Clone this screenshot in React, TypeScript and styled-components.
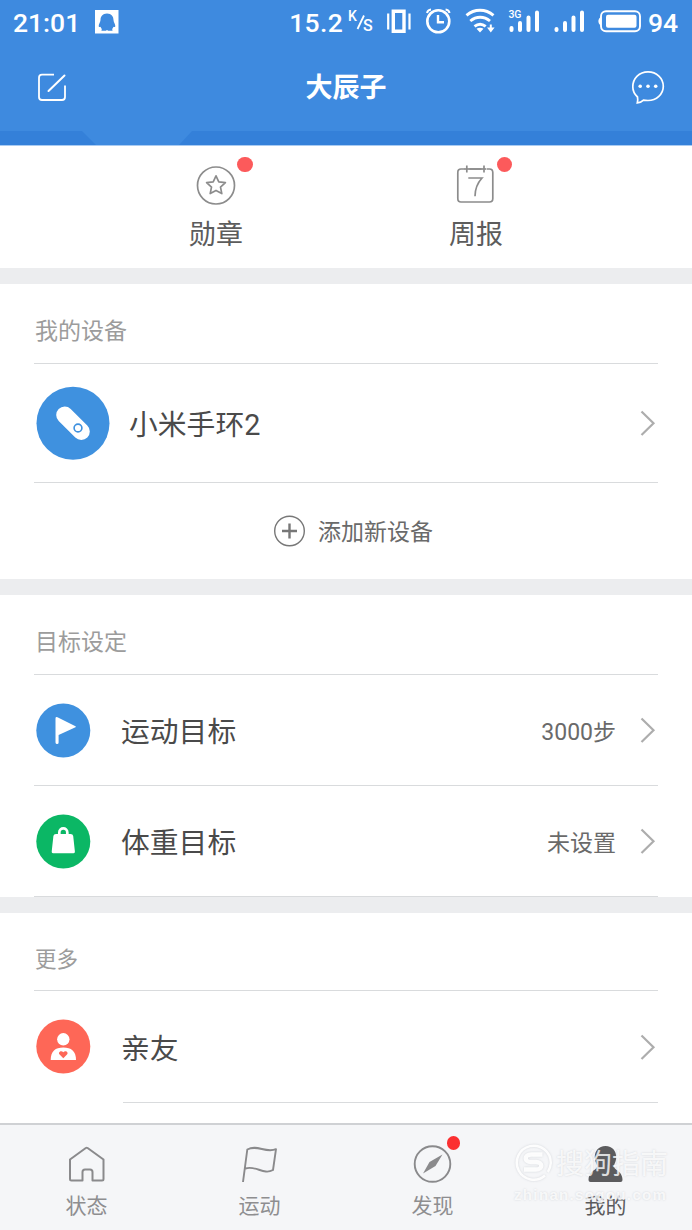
import React from "react";
import styled, { createGlobalStyle } from "styled-components";

const Global = createGlobalStyle`
  * { box-sizing: border-box; }
  body { margin: 0; background: #fff; }
`;

const Screen = styled.div`
  position: relative;
  display: flex;
  flex-direction: column;
  width: 692px;
  height: 1230px;
  overflow: hidden;
  background: #fff;
  color: #4a4a4a;
  font-family: Roboto, "Noto Sans CJK SC", sans-serif;
`;

const Header = styled.header`
  flex: none;
  height: 145px;
  background: #3e8adf;
  color: #fff;
  display: flex;
  flex-direction: column;
`;

const StatusBar = styled.div`
  display: flex;
  align-items: center;
  height: 44px;
  padding: 0 13px;
  font-size: 26.5px;
  font-weight: 500;
`;

const Clock = styled.span`
  width: 82px;
`;

const StatusRight = styled.div`
  display: flex;
  align-items: center;
  margin-left: auto;
`;

const Speed = styled.span`
  letter-spacing: 0.3px;
`;

const StatusIcons = styled.svg`
  display: block;
  margin-left: 4px;
`;

const Battery = styled.span`
  width: 31px;
  margin-left: 7px;
`;

const TitleBar = styled.div`
  display: grid;
  grid-template-columns: 60px 1fr 60px;
  align-items: center;
  height: 87px;
  padding: 0 22px;
`;

const Title = styled.h1`
  margin: 0;
  text-align: center;
  font-size: 27px;
  line-height: 40px;
  font-weight: 700;
`;

const Wave = styled.svg`
  display: block;
`;

const NavIcon = styled.svg<{ $end?: boolean }>`
  display: block;
  justify-self: ${(p) => (p.$end ? "end" : "start")};
`;

const Shortcuts = styled.div`
  flex: none;
  display: grid;
  grid-template-columns: 260px 260px;
  justify-content: center;
  height: 123px;
  padding-top: 19px;
  border-top: 1px solid #a9cbf2;
`;

const Shortcut = styled.div`
  position: relative;
  display: flex;
  flex-direction: column;
  align-items: center;
  font-size: 27px;
  line-height: 40px;
  color: #5c5c5c;
  svg { display: block; margin-bottom: 10px; }
`;

const Dot = styled.i<{ $x: number; $y: number; $size: number; $color: string }>`
  position: absolute;
  left: calc(50% + ${(p) => p.$x}px);
  top: ${(p) => p.$y}px;
  width: ${(p) => p.$size}px;
  height: ${(p) => p.$size}px;
  border-radius: 50%;
  background: ${(p) => p.$color};
`;

const Gap = styled.div`
  flex: none;
  height: 16px;
  background: #ecedef;
`;

const Section = styled.section`
  flex: none;
  padding: 0 34px;
`;

const SectionTitle = styled.h2<{ $height: number; $size?: number }>`
  display: flex;
  align-items: center;
  height: ${(p) => p.$height}px;
  margin: 0;
  padding: 11px 1px 0;
  border-bottom: 1px solid #d9dbdd;
  font-size: ${(p) => p.$size ?? 23}px;
  font-weight: 400;
  color: #9c9c9c;
`;

const Row = styled.div<{ $height: number; $line?: boolean; $gap: number }>`
  display: flex;
  align-items: center;
  height: ${(p) => p.$height}px;
  padding: 0 1px 0 2px;
  border-bottom: ${(p) => (p.$line ? "1px solid #d9dbdd" : "none")};
  svg { flex: none; display: block; }
  svg:first-child { margin-right: ${(p) => p.$gap}px; }
`;

const RowLabel = styled.span`
  flex: 1;
  padding-top: 4px;
  font-size: 28.8px;
  line-height: 42px;
`;

const RowValue = styled.span`
  margin-right: 23px;
  padding-bottom: 1px;
  font-size: 23px;
  color: #6a6a6a;
`;

const InsetLine = styled.div`
  height: 1px;
  margin-left: 89px;
  background: #d9dbdd;
`;

const AddRow = styled.div`
  display: flex;
  align-items: center;
  justify-content: center;
  gap: 12px;
  height: 96px;
  padding-left: 15px;
  font-size: 23px;
  color: #6a6a6a;
`;

const AddLabel = styled.span`
  padding-bottom: 2px;
`;

const TabBar = styled.nav`
  position: absolute;
  left: 0;
  right: 0;
  bottom: 0;
  display: grid;
  grid-template-columns: repeat(4, 1fr);
  height: 107px;
  border-top: 2px solid #cfd1d4;
  background: #f5f6f8;
`;

const Tab = styled.div<{ $active?: boolean }>`
  position: relative;
  display: flex;
  flex-direction: column;
  align-items: center;
  padding-top: 19px;
  font-size: 21px;
  line-height: 32px;
  color: ${(p) => (p.$active ? "#5a5a5c" : "#8e8e90")};
  svg { display: block; margin-bottom: 4px; }
`;

const Watermark = styled.div`
  position: absolute;
  left: 514px;
  top: 1142px;
  width: 160px;
  color: rgba(255, 255, 255, 0.8);
  text-shadow: 0 0 2px rgba(130, 135, 145, 0.3);
`;

const Brand = styled.div`
  display: flex;
  align-items: center;
  gap: 3px;
  height: 40px;
  font-size: 28px;
  white-space: nowrap;
  svg { flex: none; filter: drop-shadow(0 0 1px rgba(130, 135, 145, 0.3)); }
`;

const Site = styled.div`
  padding-top: 2px;
  font-family: "Liberation Sans", sans-serif;
  font-size: 15px;
  line-height: 22px;
  font-weight: 700;
  letter-spacing: 1.35px;
  white-space: nowrap;
`;

const Chevron = () => (
  <svg width="18" height="28" viewBox="0 0 18 28" fill="none" stroke="#adadad" strokeWidth="2.2">
    <path d="M2.500 2.500 14.500 14.300 2.500 26" />
  </svg>
);

const QQ = () => (
  <svg width="24" height="24" viewBox="0 0 24 24">
    <path d="M0 0h23.500v23.500H0z" fill="#fff" />
    <path
      d="M12 3.500c-4.500 0-6.500 3-6.500 6.500 0 2-1.800 4-1.800 6 0 1.200 1 1.200 1.800.8.300 1 .8 1.800 1.500 2.400-1 .6-.8 1.600.5 1.600h3.300l1.200-.8 1.200.8h3.300c1.300 0 1.500-1 .5-1.600.7-.6 1.200-1.400 1.500-2.400.8.400 1.800.4 1.800-.8 0-2-1.800-4-1.800-6 0-3.500-2-6.500-6.500-6.500z"
      fill="#3e8adf"
    />
  </svg>
);

/* Network unit, vibration, alarm, wifi, two signal meters and the battery */
const StatusGlyphs = () => (
  <StatusIcons width="294" height="44" viewBox="347 0 294 44" fill="none" stroke="#fff">
    <g fill="#fff" stroke="none" fontFamily="Roboto" fontWeight="500">
      <text x="348" y="21" fontSize="14">K</text>
      <text x="363" y="31" fontSize="16">S</text>
      <text x="508.500" y="18" fontSize="10.500" textLength="13">3G</text>
    </g>
    <path d="M364 15.500 357.500 29" strokeWidth="1.800" />
    <path d="M393.300 11.300h10.700v20h-10.700z" strokeWidth="3.400" />
    <path d="M388.200 13.500v16M409.500 13.500v16" strokeWidth="2.200" />
    <circle cx="438.300" cy="21.300" r="11" strokeWidth="2.600" />
    <path d="M438 15v7.300h6" strokeWidth="2.400" />
    <path d="M427 13c.5-2 2-3.300 4-3.500M449.600 13c-.5-2-2-3.300-4-3.500" strokeWidth="2" />
    <g strokeWidth="2.900">
      <path d="M466.500 15.300c8-6.700 19-6.700 27 0" />
      <path d="M470.300 21c6-5 13.700-5 19.700 0" />
      <path d="M474.500 26.300c3.500-2.700 7.700-2.700 11.200 0" />
    </g>
    <path d="m476.500 28.700 3.500 3.800 3.500-3.800c-2-1.300-5-1.300-7 0zM487 27.500h7.600l-3.800 5z" fill="#fff" stroke="none" />
    <path d="M490.800 24.500v4" strokeWidth="2" />
    <g strokeLinecap="round" strokeWidth="4">
      <path d="M511.500 28v2M520 23v7M528.500 17.500v12.500M537 12.500V30" />
      <path d="M556.500 29v1M565 23v7M573.500 17.500v12.500M582 12.500V30" />
    </g>
    <rect x="601" y="11.200" width="39" height="20" rx="5" strokeWidth="1.900" />
    <rect x="606" y="14.800" width="30.500" height="13" rx="2" fill="#fff" stroke="none" />
    <path d="M601 17c-3.500 1.500-3.500 7 0 8.500z" fill="#fff" stroke="none" />
  </StatusIcons>
);

const BandIcon = () => (
  <svg width="74" height="74" viewBox="0 0 74 74">
    <circle cx="37" cy="37.300" r="36.500" fill="#3f91df" />
    <path d="M28.700 29 45.300 45.500" stroke="#fff" strokeWidth="17" strokeLinecap="round" />
    <circle cx="42" cy="42" r="3.900" fill="none" stroke="#3f91df" strokeWidth="1.600" />
  </svg>
);

const FlagBadge = () => (
  <svg width="55" height="55" viewBox="0 0 55 55">
    <circle cx="27.300" cy="27.500" r="27" fill="#3f91df" />
    <path d="M19.500 15.500q0-2 2-1.200l18 8.900q.8.500 0 1L22.600 32v7.500q0 1.500-1.500 1.500t-1.600-1.500z" fill="#fff" />
  </svg>
);

const WeightBadge = () => (
  <svg width="55" height="55" viewBox="0 0 55 55">
    <circle cx="27.300" cy="27.500" r="27" fill="#0bb765" />
    <path d="M23.300 21v-2.500c0-5.500 8-5.500 8 0V21" fill="none" stroke="#fff" strokeWidth="2.700" />
    <path d="M20 20h14.600q2.300 0 2.600 2l1.700 15.500q.2 1.700-1.300 1.700H17q-1.500 0-1.300-1.700L17.400 22q.3-2 2.600-2z" fill="#fff" />
  </svg>
);

const FriendBadge = () => (
  <svg width="55" height="55" viewBox="0 0 55 55">
    <circle cx="27.300" cy="27.500" r="27" fill="#fe6757" />
    <circle cx="27.300" cy="20.300" r="6.200" fill="#fff" />
    <path d="M14.700 41c0-9 4.600-12.600 12.600-12.600S40 32 40 41z" fill="#fff" />
    <path d="m27.300 39.300-3.700-3.700c-2-2.200 1.500-5 3.700-2.300 2.200-2.700 5.700.1 3.700 2.300z" fill="#fe6757" />
  </svg>
);

export default function App() {
  return (
    <Screen>
      <Global />
      <Header>
        <StatusBar>
          <Clock>21:01</Clock>
          <QQ />
          <StatusRight>
            <Speed>15.2</Speed>
            <StatusGlyphs />
            <Battery>94</Battery>
          </StatusRight>
        </StatusBar>
        <TitleBar>
          <NavIcon width="44" height="40" viewBox="22 67 44 40" fill="none" stroke="#fff" strokeWidth="1.800">
            <path d="M54 73.700H42q-3 0-3 3V96q0 3 3 3h20q3 0 3-3V84.500" />
            <path d="m48.500 90 16-15.500" strokeWidth="2" strokeLinecap="round" />
          </NavIcon>
          <Title>大辰子</Title>
          <NavIcon $end width="44" height="40" viewBox="626 67 44 40" fill="none" stroke="#fff" strokeWidth="1.700">
            <path d="M637.500 96c-3-2.700-4.700-6.300-4.700-10.200 0-8.500 6.500-15 15.200-15s15.300 6.500 15.300 14.500S656.500 99.500 648 99.500q-2.500 0-4.500-.4-2.500 2.500-6.200 2.700.8-2.500.2-5.800z" />
            <g fill="#fff" stroke="none">
              <circle cx="640.200" cy="85.300" r="1.800" />
              <circle cx="648" cy="85.300" r="1.800" />
              <circle cx="655.700" cy="85.300" r="1.800" />
            </g>
          </NavIcon>
        </TitleBar>
        <Wave width="692" height="14" viewBox="0 0 692 14">
          <path d="M0 0h82l14 14H0zM192 0h500v14H179z" fill="#3480d9" />
        </Wave>
      </Header>

      <Shortcuts>
        <Shortcut>
          <svg width="40" height="40" viewBox="0 0 40 40" fill="none" stroke="#8c8c8c" strokeWidth="1.700">
            <circle cx="20" cy="20.500" r="18.500" />
            <path d="m20 10.800 2.800 6 6.600.8-4.900 4.500 1.300 6.500-5.800-3.200-5.800 3.200 1.300-6.500-4.900-4.500 6.600-.8z" strokeLinejoin="round" />
          </svg>
          勋章
          <Dot $x={21} $y={-8.5} $size={15.5} $color="#fc5a5b" />
        </Shortcut>
        <Shortcut>
          <svg width="40" height="40" viewBox="0 0 40 40" fill="none" stroke="#8c8c8c" strokeWidth="1.700">
            <path d="M8 4H5Q1.800 4 1.800 7.500v26q0 3.500 3.200 3.500h28.500q3.300 0 3.300-3.500v-26Q36.800 4 33.500 4h-3M13.500 4h12M10.800.5v7M28 .5v7M12.300 13h13.700c-4.500 5-7 11-7 18.300" />
            <path d="M8 4h22" />
          </svg>
          周报
          <Dot $x={20.5} $y={-8.5} $size={15.5} $color="#fc5a5b" />
        </Shortcut>
      </Shortcuts>

      <Gap />
      <Section>
        <SectionTitle $height={80}>我的设备</SectionTitle>
        <Row $height={119} $line $gap={19}>
          <BandIcon />
          <RowLabel>小米手环2</RowLabel>
          <Chevron />
        </Row>
        <AddRow>
          <svg width="32" height="32" viewBox="0 0 32 32" fill="none" stroke="#777">
            <circle cx="15.500" cy="16" r="14.800" strokeWidth="1.400" />
            <path d="M15.500 8.500v15M8 16h15" strokeWidth="2.400" />
          </svg>
          <AddLabel>添加新设备</AddLabel>
        </AddRow>
      </Section>

      <Gap />
      <Section>
        <SectionTitle $height={80}>目标设定</SectionTitle>
        <Row $height={111} $line $gap={30}>
          <FlagBadge />
          <RowLabel>运动目标</RowLabel>
          <RowValue>3000步</RowValue>
          <Chevron />
        </Row>
        <Row $height={111} $line $gap={30}>
          <WeightBadge />
          <RowLabel>体重目标</RowLabel>
          <RowValue>未设置</RowValue>
          <Chevron />
        </Row>
      </Section>

      <Gap />
      <Section>
        <SectionTitle $height={78} $size={21.5}>更多</SectionTitle>
        <Row $height={111} $gap={30}>
          <FriendBadge />
          <RowLabel>亲友</RowLabel>
          <Chevron />
        </Row>
        <InsetLine />
      </Section>

      <TabBar>
        <Tab>
          <svg width="42" height="42" viewBox="0 0 42 42" fill="none" stroke="#8a8a8c" strokeWidth="2" strokeLinejoin="round">
            <path d="M4 15.500 19.800 4q.9-.5 1.800 0l15.900 11.500V35q0 1.500-1.500 1.500h-9.500V28q0-2.500-2.500-2.500h-5q-2.500 0-2.500 2.500v8.500h-11q-1.500 0-1.500-1.500z" />
          </svg>
          状态
        </Tab>
        <Tab>
          <svg width="42" height="42" viewBox="0 0 42 42" fill="none" stroke="#8a8a8c" strokeWidth="1.900">
            <path d="M4 38 8.300 5.500c10-5.500 18 4 28.700-.3L34 26c-9.500 5.500-17-5-27.500-1.500" strokeLinejoin="round" />
          </svg>
          运动
        </Tab>
        <Tab>
          <svg width="42" height="42" viewBox="0 0 42 42">
            <circle cx="20.500" cy="20" r="17.800" fill="none" stroke="#8a8a8c" strokeWidth="1.900" />
            <path d="M30.500 10.500 23.500 22 11 29.500 17.500 18z" fill="#8a8a8c" />
          </svg>
          发现
          <Dot $x={14} $y={11} $size={13.5} $color="#fb3031" />
        </Tab>
        <Tab $active>
          <svg width="42" height="42" viewBox="0 0 42 42">
            <path d="M20.500 2c-7 0-10.700 5-10.700 11 0 4 1.500 6.500 2.500 9-1 3.500-4 4-6 6.500C4.500 30.500 3.500 33 3.500 36q0 2 2 2h30q2 0 2-2c0-3-1-5.500-2.800-7.500-2-2.500-5-3-6-6.500 1-2.500 2.500-5 2.500-9 0-6-3.700-11-10.700-11z" fill="#5c5c5e" />
          </svg>
          我的
        </Tab>
      </TabBar>

      <Watermark>
        <Brand>
          <svg width="39" height="40" viewBox="0 0 39 40" fill="none" stroke="rgba(255,255,255,.9)">
            <path d="M31 33.500A17 17 0 1 1 36.800 21q-.3 5-3 9" strokeWidth="2.500" />
            <path d="M28.500 12.500H17c-7 0-7 7.500 0 7.500h5c7 0 7 7.500 0 7.500H10" strokeWidth="4.500" />
          </svg>
          搜狗指南
        </Brand>
        <Site>zhinan.sogou.com</Site>
      </Watermark>
    </Screen>
  );
}
